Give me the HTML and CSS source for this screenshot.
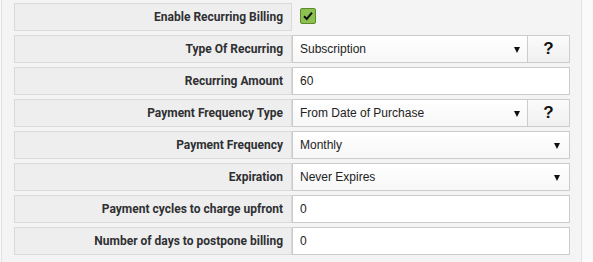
FILE: index.html
```html
<!DOCTYPE html>
<html lang="en">
  <head>
    <meta charset="UTF-8" />
    <title>Recurring Billing</title>
    <link rel="stylesheet" href="styles.css">
  </head>
  <body>
    <div class="panel">
      <!-- Enable -->
      <div class="row">
        <label class="label">Enable Recurring Billing</label>
        <div class="field field-plain">
          <span class="check">
            <svg width="12" height="12" viewBox="0 0 12 12">
              <path d="M2 6.2 L4.8 9 L10 2.6" fill="none" stroke="#111" stroke-width="2" />
            </svg>
          </span>
        </div>
      </div>

      <div class="row">
        <label class="label">Type Of Recurring</label>
        <div class="field field-split">
          <div class="select-wrap">
            <select class="select">
              <option>Subscription</option>
            </select>
            <span class="arrow"></span>
          </div>
          <button class="help">?</button>
        </div>
      </div>

      <div class="row">
        <label class="label">Recurring Amount</label>
        <div class="field">
          <input class="input" type="text" value="60" />
        </div>
      </div>

      <div class="row">
        <label class="label">Payment Frequency Type</label>
        <div class="field field-split">
          <div class="select-wrap">
            <select class="select">
              <option>From Date of Purchase</option>
            </select>
            <span class="arrow"></span>
          </div>
          <button class="help">?</button>
        </div>
      </div>

      <div class="row">
        <label class="label">Payment Frequency</label>
        <div class="field">
          <div class="select-wrap">
            <select class="select">
              <option>Monthly</option>
            </select>
            <span class="arrow"></span>
          </div>
        </div>
      </div>

      <div class="row">
        <label class="label">Expiration</label>
        <div class="field">
          <div class="select-wrap">
            <select class="select">
              <option>Never Expires</option>
            </select>
            <span class="arrow"></span>
          </div>
        </div>
      </div>

      <div class="row">
        <label class="label">Payment cycles to charge upfront</label>
        <div class="field">
          <input class="input" type="text" value="0" />
        </div>
      </div>

      <div class="row">
        <label class="label">Number of days to postpone billing</label>
        <div class="field">
          <input class="input" type="text" value="0" />
        </div>
      </div>
    </div>
  </body>
</html>
```

FILE: styles.css
```css
body {
  margin: 0;
  background: #fafafa;
  font-family: "Liberation Sans", Arial, sans-serif;
}

.panel {
  margin-left: 1px;
  width: 581px;
  height: 262px;
  box-sizing: border-box;
  padding: 3px 0 0 12px;
  border-left: 1px solid #e2e2e2;
  border-right: 1px solid #e2e2e2;
  background: #f4f4f4;
  display: flex;
  flex-direction: column;
  gap: 4px;
}

.row {
  display: grid;
  grid-template-columns: 278px 278px;
  height: 28px;
}

.label {
  box-sizing: border-box;
  height: 28px;
  border: 1px solid #d9d9d9;
  background: #eeeeee;
  display: flex;
  align-items: center;
  justify-content: flex-end;
  padding-right: 8px;
  font-family: Roboto, "Liberation Sans", sans-serif;
  font-weight: bold;
  font-size: 12px;
  color: #2f3033;
}

.field {
  display: flex;
  height: 28px;
}

.field-plain {
  align-items: center;
  padding-left: 8px;
}

.check {
  width: 14px;
  height: 14px;
  margin-top: -3px;
  border: 1px solid #5f8a2a;
  border-radius: 2px;
  background: #8cc152;
  display: flex;
  align-items: center;
  justify-content: center;
}

.input,
.select {
  box-sizing: border-box;
  width: 100%;
  height: 28px;
  margin: 0;
  border: 1px solid #cccccc;
  border-radius: 0;
  padding: 0 0 0 7px;
  font-family: "Liberation Sans", Arial, sans-serif;
  font-size: 12px;
  color: #222;
  background: #fff;
  outline: none;
}

.select {
  appearance: none;
  -webkit-appearance: none;
  background: linear-gradient(#ffffff, #f7f7f7);
}

.select-wrap {
  position: relative;
  flex: 1;
}

.arrow {
  position: absolute;
  right: 10px;
  top: 12px;
  border-left: 3px solid transparent;
  border-right: 3px solid transparent;
  border-top: 6px solid #111;
  pointer-events: none;
}

.field-split .arrow {
  right: 8px;
}

.help {
  box-sizing: border-box;
  width: 42px;
  height: 28px;
  margin: 0;
  border: 1px solid #cccccc;
  border-left: none;
  background: linear-gradient(#fbfbfb, #f0f0f0);
  font-family: "Liberation Sans", Arial, sans-serif;
  font-weight: bold;
  font-size: 17px;
  color: #111;
  padding: 0;
}
```
